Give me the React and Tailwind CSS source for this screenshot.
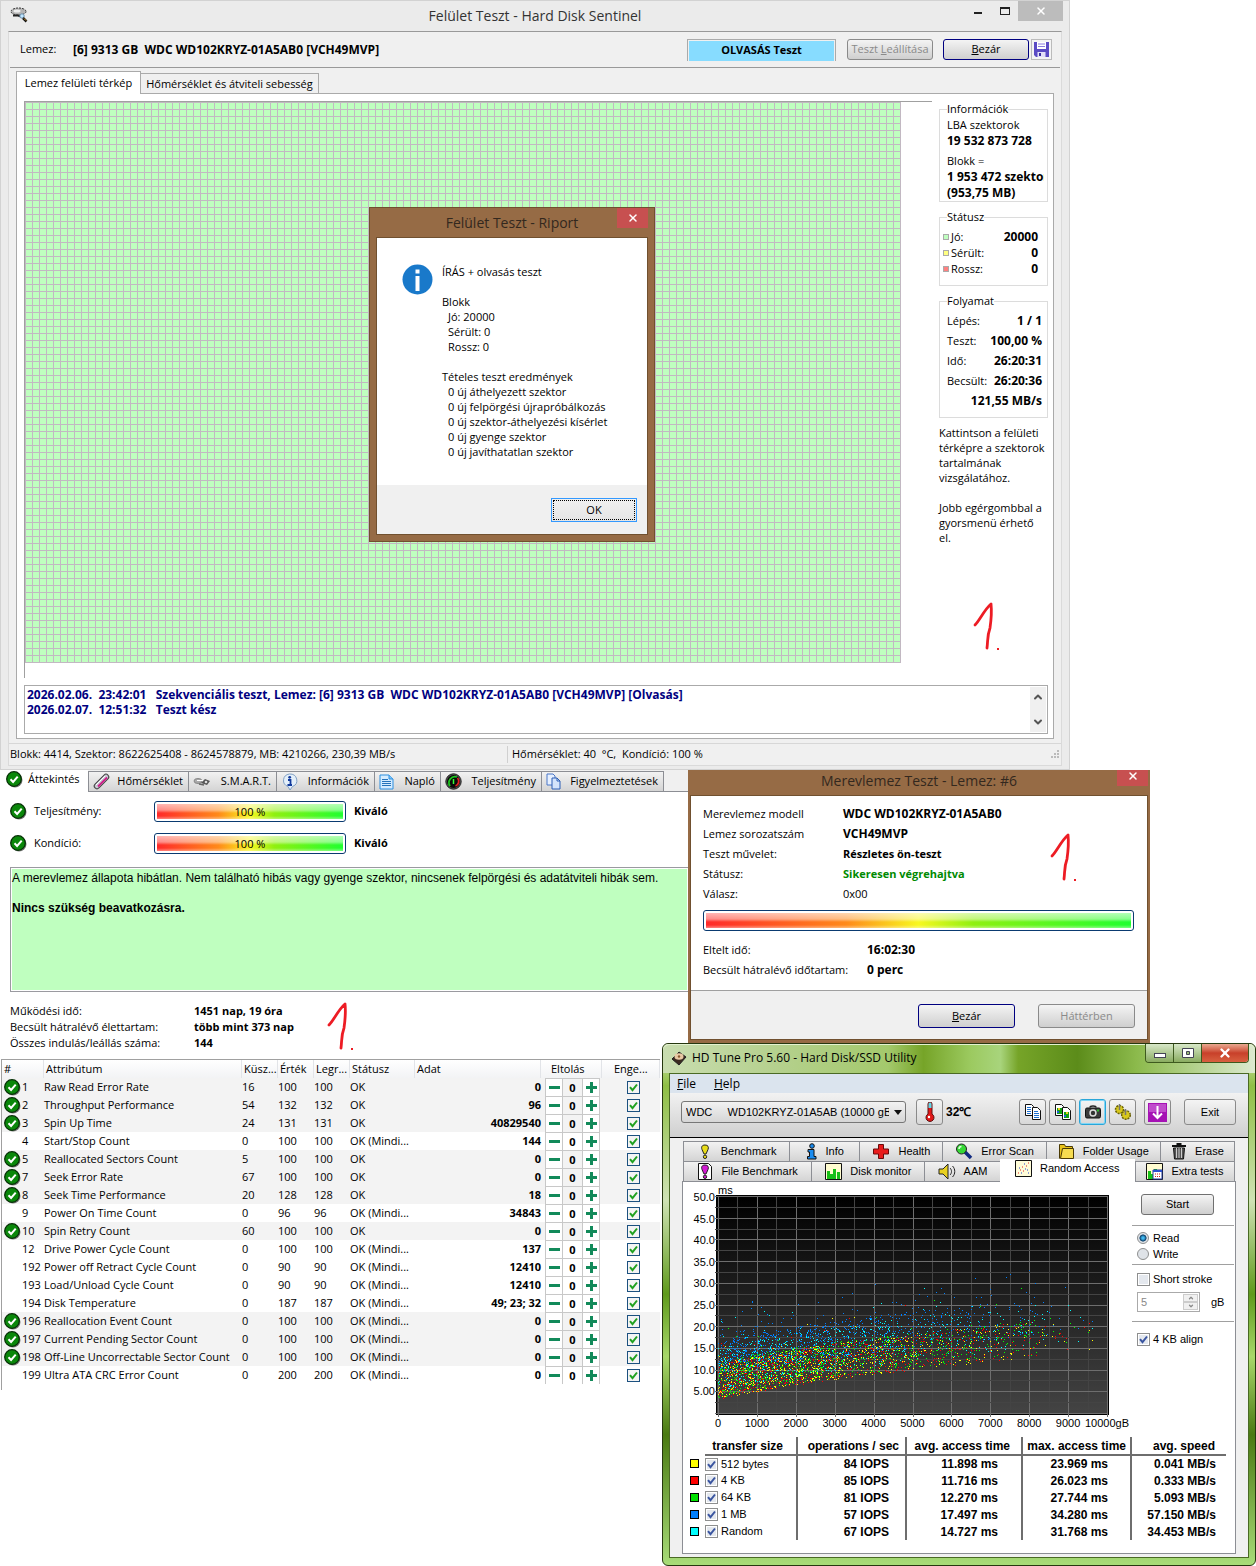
import React, { useState } from 'react';
import { X, ChevronUp, ChevronDown } from 'lucide-react';
import { clsx } from 'clsx';

const SMART_ROWS = [
  [1, 'Raw Read Error Rate', 16, 100, 100, true, '0'],
  [2, 'Throughput Performance', 54, 132, 132, true, '96'],
  [3, 'Spin Up Time', 24, 131, 131, true, '40829540'],
  [4, 'Start/Stop Count', 0, 100, 100, false, '144'],
  [5, 'Reallocated Sectors Count', 5, 100, 100, true, '0'],
  [7, 'Seek Error Rate', 67, 100, 100, true, '0'],
  [8, 'Seek Time Performance', 20, 128, 128, true, '18'],
  [9, 'Power On Time Count', 0, 96, 96, false, '34843'],
  [10, 'Spin Retry Count', 60, 100, 100, true, '0'],
  [12, 'Drive Power Cycle Count', 0, 100, 100, false, '137'],
  [192, 'Power off Retract Cycle Count', 0, 90, 90, false, '12410'],
  [193, 'Load/Unload Cycle Count', 0, 90, 90, false, '12410'],
  [194, 'Disk Temperature', 0, 187, 187, false, '49; 23; 32'],
  [196, 'Reallocation Event Count', 0, 100, 100, false, '0', true],
  [197, 'Current Pending Sector Count', 0, 100, 100, false, '0', true],
  [198, 'Off-Line Uncorrectable Sector Count', 0, 100, 100, false, '0', true],
  [199, 'Ultra ATA CRC Error Count', 0, 200, 200, false, '0'],
];

const RESULTS = [
  ['512 bytes', 'bg-[#ffff00]', '84 IOPS', '11.898 ms', '23.969 ms', '0.041 MB/s'],
  ['4 KB', 'bg-[#ff0000]', '85 IOPS', '11.716 ms', '26.023 ms', '0.333 MB/s'],
  ['64 KB', 'bg-[#00e000]', '81 IOPS', '12.270 ms', '27.744 ms', '5.093 MB/s'],
  ['1 MB', 'bg-[#0080ff]', '57 IOPS', '17.497 ms', '34.280 ms', '57.150 MB/s'],
  ['Random', 'bg-[#00ffff]', '67 IOPS', '14.727 ms', '31.768 ms', '34.453 MB/s'],
];

/* ---------- icons ---------- */

const OkIcon = () => (
  <svg width="17" height="17" viewBox="0 0 17 17" className="shrink-0">
    <circle cx="9" cy="9" r="7.5" fill="#777" />
    <circle cx="8" cy="8" r="7.3" fill="#0a870a" stroke="#063006" strokeWidth="1.3" />
    <path d="M4.500 8.200l2.600 2.800 4.600-5.400" fill="none" stroke="#fff" strokeWidth="2" />
  </svg>
);

const DiskIcon = () => (
  <svg width="18" height="16" viewBox="0 0 18 16">
    <ellipse cx="8.500" cy="4.500" rx="7.500" ry="3.500" fill="#b4b4b4" stroke="#333" strokeDasharray="2 1" />
    <ellipse cx="7" cy="4" rx="3.500" ry="1.500" fill="#eee" />
    <path d="M3 8.500h5l3 1" stroke="#222" strokeWidth="2" fill="none" />
    <circle cx="12" cy="9" r="2.200" fill="#bfe6ff" stroke="#6a8ca8" />
    <path d="M13 11l3.500 3.500" stroke="#111" strokeWidth="2.500" />
    <path d="M14 11.500l2 2" stroke="#e0a030" />
  </svg>
);

const FloppyIcon = () => (
  <svg width="17" height="17" viewBox="0 0 17 17">
    <path d="M1 1h15v15H3l-2-2z" fill="#5b4bc4" />
    <path d="M4 1h9v7H4z" fill="#fff" />
    <path d="M5 3h7M5 5.500h7" stroke="#8a7de0" />
    <path d="M4.500 11h8v5h-8z" fill="#e4e0f8" />
    <path d="M6 12h2v3H6z" fill="#3a2ea0" />
  </svg>
);

const TubeIcon = () => (
  <svg width="18" height="17" viewBox="0 0 18 17">
    <path d="M4 13L13 4" stroke="#444" strokeWidth="6.500" strokeLinecap="round" />
    <path d="M4 13L13 4" stroke="#c9c9d4" strokeWidth="4.500" strokeLinecap="round" />
    <path d="M5 13.500L14 4.500" stroke="#d0208a" strokeWidth="1.800" />
    <path d="M3 12l9-9" stroke="#fff" />
  </svg>
);

const SmartIcon = () => (
  <svg width="18" height="14" viewBox="0 0 18 14">
    <ellipse cx="5" cy="6" rx="4" ry="2.500" fill="#aaa" stroke="#888" />
    <path d="M8 8l4-4 5 2-3 4z" fill="#555" />
    <path d="M4 5.500h6" stroke="#fff" />
    <path d="M6 9l5 1" stroke="#666" strokeWidth="1.500" />
    <circle cx="13" cy="7" r="1.300" fill="#ddd" />
  </svg>
);

const BalloonIcon = () => (
  <svg width="17" height="18" viewBox="0 0 17 18">
    <path d="M8.500 1a7 6.500 0 0 1 3 12.500L9 17l-2-3.500A7 6.500 0 0 1 8.500 1z" fill="#e3effa" stroke="#7f9fc4" />
    <path d="M7 7h2.500v5M6.500 12h4.500" stroke="#123a9c" strokeWidth="1.800" fill="none" />
    <circle cx="8.700" cy="4.300" r="1.400" fill="#123a9c" />
  </svg>
);

const NoteIcon = () => (
  <svg width="15" height="16" viewBox="0 0 15 16">
    <path d="M1 1h9l4 4v10H1z" fill="#d5ecff" stroke="#2d8fe0" />
    <path d="M10 1v4h4" fill="#7cc4f8" stroke="#2d8fe0" />
    <path d="M3 5.500h6M3 7.500h9M3 9.500h9M3 11.500h9" stroke="#2573bb" />
  </svg>
);

const GaugeIcon = () => (
  <svg width="17" height="17" viewBox="0 0 17 17">
    <circle cx="8.500" cy="8.500" r="7.700" fill="#555" stroke="#222" />
    <circle cx="8.500" cy="8.500" r="6.500" fill="#0a0a0a" />
    <path d="M5 13a6 6 0 0 1 7-9" stroke="#1ec81e" strokeWidth="1.800" fill="none" />
    <path d="M12.500 5a5 5 0 0 1-2 8" stroke="#e02020" strokeWidth="1.800" fill="none" />
    <path d="M8.500 11V6" stroke="#3f3" strokeWidth="1.500" />
  </svg>
);

const PagesIcon = () => (
  <svg width="15" height="17" viewBox="0 0 15 17">
    <path d="M1 1h6l2 2v9H1z" fill="#e6f0ff" stroke="#4a77c8" />
    <path d="M6 5h5l3 3v8H6z" fill="#d4e4fb" stroke="#2d5fb5" />
    <path d="M11 5v3h3" fill="none" stroke="#2d5fb5" />
  </svg>
);

const CopyIcon = ({ image }) => (
  <svg width="18" height="18" viewBox="0 0 18 18">
    <path d="M1.500 1.500h6l2 2v9h-8z" fill="#fff" stroke="#111" />
    <path d="M8.500 4.500h5l3 3v9h-8z" fill="#fff" stroke="#111" />
    {image ? (
      <>
        <path d="M3 5h5v6H3zM10 9h5v6h-5z" fill="#12a012" />
        <path d="M4 5h2v2H4zM12 9h2v2h-2z" fill="#e8d020" />
        <path d="M3 8h2v2H3zM10 12h2v2h-2z" fill="#2060e0" />
      </>
    ) : (
      <path d="M3 4.500h4M3 6.500h4M3 8.500h4M3 10.500h4M10 8.500h4M10 10.500h5M10 12.500h5M10 14.500h5" stroke="#1d70d0" />
    )}
  </svg>
);

const CameraIcon = () => (
  <svg width="18" height="16" viewBox="0 0 18 16">
    <path d="M6 3.500c0-2 6-2 6 0" fill="none" stroke="#222" strokeWidth="1.500" />
    <rect x="1.500" y="4" width="15" height="10" rx="1.500" fill="#3b3b3b" stroke="#111" />
    <circle cx="9" cy="9" r="3.700" fill="#ddd" />
    <circle cx="9" cy="9" r="2.200" fill="#333" />
    <path d="M13 5.500h2v2h-2z" fill="#2ac02a" />
  </svg>
);

const GearsIcon = () => (
  <svg width="18" height="18" viewBox="0 0 18 18">
    <circle cx="5.500" cy="6.500" r="4" fill="#d8c81c" stroke="#6b6208" strokeDasharray="2 1" strokeWidth="1.500" />
    <circle cx="12" cy="12" r="4.300" fill="#d8c81c" stroke="#6b6208" strokeDasharray="2 1" strokeWidth="1.500" />
    <path d="M5.500 1v6M11.500 6v6" stroke="#777" strokeWidth="1.500" />
  </svg>
);

const ArrowIcon = () => (
  <svg width="19" height="19" viewBox="0 0 19 19">
    <path d="M0 0h19v19H0z" fill="#a512b4" />
    <path d="M1 1h17v8H1z" fill="#c04ccc" />
    <path d="M9.500 3v12M5 10.500l4.500 4.500 4.500-4.500" stroke="#fff" strokeWidth="2" fill="none" />
  </svg>
);

const ThermoIcon = () => (
  <svg width="12" height="20" viewBox="0 0 12 20">
    <path d="M4 2a2 2 0 0 1 4 0v10a4 4 0 1 1-4 0z" fill="#e01818" stroke="#5a1010" />
    <path d="M4.500 2a1.500 1.500 0 0 1 3 0v4h-3z" fill="#5fd8e8" />
    <circle cx="5" cy="15" r="1.200" fill="#fff" />
  </svg>
);

const BangIcon = ({ page }) => (
  <svg width="16" height="17" viewBox="0 0 16 17">
    {page && <path d="M1.500.500h10l3 3v13h-13z" fill="#fff" stroke="#111" />}
    <path d="M8 2c3 0 4 2 3 4.500L9 11H7L5 6.500C4 4 5 2 8 2z" fill={page ? '#d31bd3' : '#e8dc18'} stroke="#222" />
    <circle cx="8" cy="13.800" r="1.700" fill={page ? '#d31bd3' : '#e8dc18'} stroke="#222" />
  </svg>
);

const InfoIcon = () => (
  <svg width="12" height="17" viewBox="0 0 12 17">
    <circle cx="6" cy="3" r="2.300" fill="#1a8cf0" stroke="#111" />
    <path d="M2 6.500h6v7h2v2.500H1.500v-2.500h2v-4.500H2z" fill="#1a8cf0" stroke="#111" />
  </svg>
);

const CrossIcon = () => (
  <svg width="18" height="17" viewBox="0 0 18 17">
    <path d="M6.500 1.500h5v4.500h5v5h-5V15.500h-5V11h-5V6h5z" fill="#e81c1c" stroke="#6a0a0a" />
  </svg>
);

const LoupeIcon = () => (
  <svg width="18" height="17" viewBox="0 0 18 17">
    <path d="M10 9l6 6" stroke="#112a80" strokeWidth="3.500" />
    <circle cx="6.500" cy="6" r="5" fill="#35d835" stroke="#222" />
    <path d="M4 6a2.500 2.500 0 0 1 2.500-2.500" stroke="#dfd" strokeWidth="1.500" fill="none" />
  </svg>
);

const FolderIcon = () => (
  <svg width="17" height="17" viewBox="0 0 17 17">
    <path d="M1.500 15.500v-14h5l1 2h7v3" fill="#e8c21a" stroke="#4a3a04" />
    <path d="M4.500 5.500h11v10h-13z" fill="#f6dc50" stroke="#4a3a04" />
  </svg>
);

const BinIcon = () => (
  <svg width="16" height="17" viewBox="0 0 16 17">
    <path d="M1 3h14M5.500 1h5" stroke="#111" strokeWidth="2" />
    <path d="M2.500 5h11l-1 11h-9z" fill="#555" stroke="#111" />
    <path d="M5.500 5v10M8 5v10M10.500 5v10" stroke="#ccc" />
  </svg>
);

const BarsIcon = ({ grid }) => (
  <svg width="17" height="17" viewBox="0 0 17 17">
    <path d="M.500.500h16v16H.500z" fill="#fffcd0" stroke="#111" />
    <path d="M2 8h3v8H2zM5 11h3v5H5zM8 6h3v10H8zM12 9h3v7h-3z" fill="#18c018" />
    {grid && (
      <>
        <path d="M7 7h9v9H7z" fill="#fff" stroke="#223a9a" />
        <path d="M7 7h9v2H7z" fill="#2a50d0" />
        <path d="M9 11h6M9 13.500h6" stroke="#d02020" strokeDasharray="1 1" />
      </>
    )}
  </svg>
);

const SpeakerIcon = () => (
  <svg width="18" height="17" viewBox="0 0 18 17">
    <path d="M1 6h4l5-5v15l-5-5H1z" fill="#e8d020" stroke="#222" />
    <path d="M12 5c2 2 2 5 0 7M14.500 3c3 3 3 8 0 11" stroke="#222" fill="none" />
  </svg>
);

const DotsIcon = () => (
  <svg width="17" height="17" viewBox="0 0 17 17">
    <path d="M.500.500h16v16H.500z" fill="#fffcd8" stroke="#111" />
    <path d="M3 13h1M5 10h1M8 11h1M7 7h1M11 6h1M13 3h1" stroke="#e02020" />
    <path d="M4 8h1M6 13h1M10 9h1M12 10h1M9 4h1M13 13h1" stroke="#2040d0" />
  </svg>
);

const PenMark = ({ className }) => (
  <svg width="32" height="56" viewBox="0 0 32 56" className={clsx('pointer-events-none absolute', className)}>
    <path d="M5 27C10 22 14 12 21 6c1 9 0 17-1 24-3 8-2 13-3 20" fill="none" stroke="#ed1c24" strokeWidth="2.800" strokeLinecap="round" strokeLinejoin="round" />
    <path d="M27 50h2v2h-2z" fill="#ed1c24" />
  </svg>
);

/* ---------- shared controls ---------- */

function CheckBox({ id, label, defaultChecked, tone }) {
  const [on, setOn] = useState(!!defaultChecked);
  const green = tone === 'green';
  return (
    <span className="inline-grid shrink-0">
      <input
        id={id} type="checkbox" aria-label={label} checked={on} onChange={(e) => setOn(e.target.checked)}
        className={clsx('col-start-1 row-start-1 h-[13px] w-[13px] appearance-none border', green ? 'border-[#1c5180] bg-[#f4f4f4]' : 'border-[#8e8f8f] bg-[#e4e8ee] shadow-[inset_0_0_0_1px_#fff]')}
      />
      {on && (
        <svg viewBox="0 0 13 13" className="pointer-events-none col-start-1 row-start-1 h-[13px] w-[13px]">
          <path d="M3 6.200l2.500 3L10 3.500" fill="none" stroke={green ? '#21a121' : '#3a55a0'} strokeWidth="2" />
        </svg>
      )}
    </span>
  );
}

const Radio = ({ id, label, defaultChecked }) => (
  <label htmlFor={id} className="flex h-4 items-center gap-1">
    <input
      id={id} type="radio" name="mode" defaultChecked={defaultChecked}
      className="h-3 w-3 appearance-none rounded-full border border-[#8e8f8f] bg-[#dfe3e8] checked:bg-[radial-gradient(circle,#3fb8f0_15%,#0c3c66_45%,#dfe3e8_55%)]"
    />
    {label}
  </label>
);

const WinButton = ({ children, disabled, className }) => (
  <button
    type="button" disabled={disabled}
    className={clsx('rounded-[3px] border bg-gradient-to-b from-[#f4f4f4] to-[#cfcfcf] text-center', disabled ? 'border-[#8a8a8a] text-[#8a8a8a]' : 'border-[#000080]', className)}
  >
    {children}
  </button>
);

const HealthBar = ({ children }) => (
  <div className="rounded-[3px] border border-[#0a3a70] bg-white p-[2px]">
    <div className="h-[15px] bg-[linear-gradient(180deg,rgba(255,255,255,0.65),rgba(255,255,255,0.45)_40%,rgba(255,255,255,0)_60%,rgba(255,255,255,0)_80%,rgba(255,255,255,0.4)),linear-gradient(90deg,#ff2a2a,#ff8a1a_33%,#f8f820_50%,#90f010_63%,#20ff30)] text-center leading-[15px]">
      {children}
    </div>
  </div>
);

const Group = ({ title, className, children }) => (
  <fieldset className={clsx('min-w-0 border border-[#dcdcdc] px-[7px]', className)}>
    <legend className="leading-4">{title}</legend>
    {children}
  </fieldset>
);

const Pair = ({ label, value, className }) => (
  <div className={clsx('flex justify-between whitespace-nowrap', className)}>
    <span>{label}</span>
    <b className="text-xs leading-5">{value}</b>
  </div>
);

/* ---------- surface test window ---------- */

function ReportDialog() {
  return (
    <div className="absolute left-[368px] top-[206px] w-[286px] border border-[#70502f] bg-[#966b45] px-[6px] pb-[6px]">
      <div className="relative flex h-[29px] items-center justify-center">
        <h2 className="text-sm text-[#33281e]">Felület Teszt - Riport</h2>
        <button type="button" aria-label="Close" className="absolute right-0 top-0 flex h-5 w-[31px] items-center justify-center bg-[#c75050] text-white">
          <X size={12} strokeWidth={3} />
        </button>
      </div>
      <div className="border border-[#70502f] bg-white">
        <div className="flex h-[247px] items-start gap-[9px] pl-[25px] pt-[26px]">
          <svg width="31" height="31" viewBox="0 0 31 31">
            <circle cx="15.500" cy="15.500" r="15" fill="#1979ca" />
            <path d="M13.500 12h4v15h-4zM13.500 5.500h4v4h-4z" fill="#fff" />
          </svg>
          <div className="whitespace-pre leading-[15px]">
            <p>ÍRÁS + olvasás teszt</p>
            <p className="mt-[15px]">Blokk</p>
            <div className="pl-1.5">
              <p>Jó: 20000</p>
              <p>Sérült: 0</p>
              <p>Rossz: 0</p>
            </div>
            <p className="mt-[15px]">Tételes teszt eredmények</p>
            <div className="pl-1.5">
              <p>0 új áthelyezett szektor</p>
              <p>0 új felpörgési újrapróbálkozás</p>
              <p>0 új szektor-áthelyezési kísérlet</p>
              <p>0 új gyenge szektor</p>
              <p>0 új javíthatatlan szektor</p>
            </div>
          </div>
        </div>
        <div className="flex h-[49px] items-center justify-end bg-[#f0f0f0] pr-[10px]">
          <button type="button" className="h-6 w-[86px] border border-[#3399ff] bg-gradient-to-b from-[#f0f0f0] to-[#e5e5e5] p-px">
            <span className="block h-full border border-dotted border-black leading-[18px]">OK</span>
          </button>
        </div>
      </div>
    </div>
  );
}

function SurfaceTest() {
  return (
    <section className="relative mr-[186px] border border-[#d2d2d2] bg-[#ebebeb] px-[7px] pb-[3px]">
      <header className="relative flex h-[30px] items-center justify-center">
        <span className="absolute left-[2px] top-[6px]"><DiskIcon /></span>
        <h1 className="text-sm text-[#333]">Felület Teszt - Hard Disk Sentinel</h1>
        <div className="absolute -right-px top-0 flex">
          <button type="button" aria-label="Minimize" className="flex h-5 w-[27px] items-center justify-center pt-1">
            <span className="h-[2px] w-2 bg-[#222]" />
          </button>
          <button type="button" aria-label="Maximize" className="flex h-5 w-[27px] items-center justify-center">
            <span className="h-2 w-[10px] border border-t-2 border-[#222]" />
          </button>
          <button type="button" aria-label="Close" className="flex h-5 w-[45px] items-center justify-center bg-[#bcbcbc] text-white">
            <X size={12} strokeWidth={3} />
          </button>
        </div>
      </header>

      <div className="border-x border-b border-t border-[#dadada] border-t-[#999] bg-[#f0f0f0]">
        <div className="mx-px flex h-9 items-center border-b border-[#999] px-[10px] pr-2">
          <span className="w-[53px]">Lemez:</span>
          <b className="flex-1 whitespace-pre text-xs">[6] 9313 GB  WDC WD102KRYZ-01A5AB0 [VCH49MVP]</b>
          <div className="h-[22px] w-[149px] border-x border-t border-[#aaa] p-px">
            <div className="h-5 bg-[#87dcff] text-center font-bold leading-[18px]">OLVASÁS Teszt</div>
          </div>
          <WinButton disabled className="ml-[11px] h-[21px] w-[86px] whitespace-nowrap">Teszt <u>L</u>eállítása</WinButton>
          <WinButton className="ml-[10px] h-[21px] w-[86px]"><u>B</u>ezár</WinButton>
          <button type="button" aria-label="Save" className="ml-[2px] flex h-[21px] w-[21px] items-center justify-center border border-[#bbb] bg-[#f4f4f4]"><FloppyIcon /></button>
        </div>

        <div className="mt-[3px] flex items-end px-[7px]">
          <button type="button" className="relative -mb-px h-[23px] w-[125px] whitespace-nowrap border-x border-t border-[#aaa] bg-white pb-px leading-5">Lemez felületi térkép</button>
          <button type="button" className="h-5 w-[178px] whitespace-nowrap border-r border-t border-[#aaa] leading-5">Hőmérséklet és átviteli sebesség</button>
        </div>

        <div className="mx-[7px] border border-[#aaa] bg-white pb-1 pl-[7px] pr-[5px] pt-[7px]">
          <div className="flex gap-[7px]">
            <div className="h-[577px] flex-1 border-l border-t border-[#a0a0a0]">
              <div className="mr-[31px] h-[561px] bg-[#bfffbf] bg-[linear-gradient(#c2b8c2_1px,transparent_1px),linear-gradient(90deg,#c2b8c2_1px,transparent_1px)] bg-[size:7px_7px]" />
            </div>
            <aside className="w-[109px]">
              <Group title="Információk" className="overflow-hidden">
                <div className="whitespace-nowrap leading-4">
                  <p>LBA szektorok</p>
                  <p className="text-xs font-bold">19 532 873 728</p>
                  <p className="mt-1">Blokk =</p>
                  <p className="-mr-1 overflow-hidden text-xs font-bold">1 953 472 szektor</p>
                  <p className="text-xs font-bold">(953,75 MB)</p>
                </div>
              </Group>
              <Group title="Státusz" className="mt-[7px] pb-2 pt-1">
                {[['Jó:', '20000', 'bg-[#bfffbf]'], ['Sérült:', '0', 'bg-[#ffff80]'], ['Rossz:', '0', 'bg-[#ff8080]']].map(([label, value, color]) => (
                  <div key={label} className="-ml-1 mr-[2px] flex items-center gap-[2px] leading-4">
                    <span className={clsx('h-[6px] w-[6px] border border-[#aaa]', color)} />
                    <span className="flex-1">{label}</span>
                    <b className="text-xs">{value}</b>
                  </div>
                ))}
              </Group>
              <Group title="Folyamat" className="mt-[7px] pb-[6px] pt-[2px]">
                <div className="-mr-[2px] leading-5">
                  <Pair label="Lépés:" value="1 / 1" />
                  <Pair label="Teszt:" value="100,00 %" />
                  <Pair label="Idő:" value="26:20:31" />
                  <Pair label="Becsült:" value="26:20:36" />
                  <p className="text-right text-xs font-bold leading-5">121,55 MB/s</p>
                </div>
              </Group>
              <p className="mt-[7px] leading-[15px]">Kattintson a felületi térképre a szektorok tartalmának vizsgálatához.</p>
              <p className="mt-[15px] leading-[15px]">Jobb egérgombbal a gyorsmenü érhető el.</p>
            </aside>
          </div>

          <div className="mt-[7px] flex h-[49px] border border-[#aaa] bg-white">
            <div className="flex-1 whitespace-pre pl-[2px] pt-px text-xs font-bold leading-[15px] text-[#000080]">
              <p className="leading-[15px]">2026.02.06.  23:42:01   Szekvenciális teszt, Lemez: [6] 9313 GB  WDC WD102KRYZ-01A5AB0 [VCH49MVP] [Olvasás]</p>
              <p className="leading-[15px]">2026.02.07.  12:51:32   Teszt kész</p>
            </div>
            <div className="my-px mr-px flex w-4 flex-col items-center justify-between bg-[#f0f0f0] py-1 text-[#555]">
              <button type="button" aria-label="Scroll up"><ChevronUp size={12} strokeWidth={4} /></button>
              <button type="button" aria-label="Scroll down"><ChevronDown size={12} strokeWidth={4} /></button>
            </div>
          </div>
        </div>

        <footer className="mt-1 flex h-[22px] items-center border-t border-[#d7d7d7] pl-px">
          <span className="w-[498px] border-r border-[#d0d0d0]">Blokk: 4414, Szektor: 8622625408 - 8624578879, MB: 4210266, 230,39 MB/s</span>
          <span className="flex-1 whitespace-pre pl-1">Hőmérséklet: 40  °C,  Kondíció: 100 %</span>
          <svg width="12" height="12" viewBox="0 0 12 12"><path d="M8 1h2v2H8zM5 4h2v2H5zM8 4h2v2H8zM2 7h2v2H2zM5 7h2v2H5zM8 7h2v2H8z" fill="#bbb" /></svg>
        </footer>
      </div>

      <ReportDialog />
      <PenMark className="left-[969px] top-[597px]" />
    </section>
  );
}

/* ---------- disk overview ---------- */

const TABS = [
  ['Hőmérséklet', TubeIcon, 'w-[101px]'],
  ['S.M.A.R.T.', SmartIcon, 'w-[88px]'],
  ['Információk', BalloonIcon, 'w-[98px]'],
  ['Napló', NoteIcon, 'w-[66px]'],
  ['Teljesítmény', GaugeIcon, 'w-[101px]'],
  ['Figyelmeztetések', PagesIcon, 'w-[122px]'],
];

function Overview() {
  return (
    <section className="relative -mr-[26px] h-[289px]">
      <nav className="flex h-[22px] items-end border-b border-[#8c8e94] bg-[#f0f0f0]">
        <button type="button" className="-mb-px flex h-[22px] w-[88px] items-center gap-[5px] bg-white pb-1 pl-[6px]"><OkIcon />Áttekintés</button>
        {TABS.map(([label, Icon, width], i) => (
          <button key={label} type="button" className={clsx('flex h-5 items-center justify-between whitespace-nowrap border-r border-t border-[#8c8e94] bg-gradient-to-b from-[#f2f2f2] to-[#d4d4d4] pl-1 pr-[5px]', i === 0 && 'border-l', width)}>
            <Icon />{label}
          </button>
        ))}
      </nav>
      <div className="pl-[10px] pt-[3px]">
        {['Teljesítmény:', 'Kondíció:'].map((label) => (
          <div key={label} className="flex h-8 items-center">
            <OkIcon />
            <span className="w-[127px] pl-[7px]">{label}</span>
            <div className="w-[192px]"><HealthBar>100 %</HealthBar></div>
            <b className="pl-2">Kiváló</b>
          </div>
        ))}
        <div className="mt-[8px] h-[125px] whitespace-nowrap border border-r-0 border-[#9a9aa0] bg-[#bfffbf] pl-px pt-[3px] font-['Liberation_Sans',sans-serif] text-xs shadow-[inset_0_0_0_1px_#fff]">
          <p className="leading-[15px]">A merevlemez állapota hibátlan. Nem található hibás vagy gyenge szektor, nincsenek felpörgési és adatátviteli hibák sem.</p>
          <p className="mt-[15px] font-bold leading-[15px]">Nincs szükség beavatkozásra.</p>
        </div>
        <dl className="mt-[11px] grid grid-cols-[184px_1fr] leading-4">
          <dt>Működési idő:</dt><dd className="font-bold">1451 nap, 19 óra</dd>
          <dt>Becsült hátralévő élettartam:</dt><dd className="font-bold">több mint 373 nap</dd>
          <dt>Összes indulás/leállás száma:</dt><dd className="font-bold">144</dd>
        </dl>
      </div>
      <PenMark className="left-[324px] top-[228px]" />
    </section>
  );
}

function SmartTable() {
  return (
    <section className="ml-px mr-[2px] border-l border-t border-[#a0a0a0] pb-[6px]">
      <table className="w-full table-fixed border-separate border-spacing-0 whitespace-nowrap text-left">
        <colgroup>
          <col className="w-[42px]" />
          <col className="w-[198px]" />
          <col className="w-9" />
          <col className="w-9" />
          <col className="w-9" />
          <col className="w-[65px]" />
          <col />
          <col className="w-[61px]" />
          <col className="w-[58px]" />
        </colgroup>
        <thead>
          <tr className="h-[18px] bg-gradient-to-b from-white to-[#f2f3f5]">
            {['#', 'Attribútum', 'Küsz...', 'Érték', 'Legr...', 'Státusz', 'Adat', 'Eltolás', 'Enge...'].map((h) => (
              <th key={h} className={clsx('border-r border-[#e2e4e8] p-0 font-normal leading-[18px]', h === 'Eltolás' ? 'pl-[10px]' : h === 'Enge...' ? 'pl-3' : 'pl-[2px]')}>{h}</th>
            ))}
          </tr>
        </thead>
        <tbody>
          {SMART_ROWS.map(([id, name, threshold, value, worst, ok, data, flagged]) => (
            <tr key={id} className={clsx('h-[18px]', (ok || flagged) && 'bg-[#f3f3f3]')}>
              <td className="p-0">
                <div className="flex h-[18px] items-center pl-[2px]">
                  <span className="w-[18px] pt-px">{(ok || flagged) && <OkIcon />}</span>
                  {id}
                </div>
              </td>
              <td className="p-0">{name}</td>
              <td className="p-0">{threshold}</td>
              <td className="p-0">{value}</td>
              <td className="p-0">{worst}</td>
              <td className="p-0">{ok ? 'OK' : 'OK (Mindi...'}</td>
              <td className="p-0 text-right font-bold">{data}</td>
              <td className="p-0">
                <div className="ml-1 flex h-[18px] w-[55px] items-stretch border border-b-0 border-[#c8c8c8] leading-[17px]">
                  <button type="button" aria-label={`Decrease offset ${id}`} className="flex w-4 items-center justify-center bg-white">
                    <span className="h-[3px] w-[11px] bg-[#128a5a]" />
                  </button>
                  <b className="flex-1 border-x border-[#c8c8c8] text-center">0</b>
                  <button type="button" aria-label={`Increase offset ${id}`} className="flex w-4 items-center justify-center bg-white">
                    <svg width="11" height="11" viewBox="0 0 11 11"><path d="M4 0h3v4h4v3H7v4H4V7H0V4h4z" fill="#128a5a" /></svg>
                  </button>
                </div>
              </td>
              <td className="p-0">
                <div className="flex pl-[25px]"><CheckBox label={`Enable ${name}`} tone="green" defaultChecked /></div>
              </td>
            </tr>
          ))}
        </tbody>
      </table>
    </section>
  );
}

/* ---------- self-test dialog ---------- */

function SelfTest() {
  return (
    <section className="relative ml-[26px] mr-[106px] bg-[#966b45] px-[2px] pb-[3px]">
      <header className="relative flex h-[25px] items-center justify-center pb-[3px]">
        <h2 className="text-sm text-[#33281e]">Merevlemez Teszt - Lemez: #6</h2>
        <button type="button" aria-label="Close" className="absolute right-0 top-0 flex h-4 w-[31px] items-center justify-center bg-[#c75050] pb-1 text-white">
          <X size={12} strokeWidth={3} />
        </button>
      </header>
      <div className="border border-[#70502f] bg-white">
        <div className="h-[194px] pl-3 pr-[13px] pt-2 leading-5">
          <dl className="grid grid-cols-[140px_1fr]">
            <dt>Merevlemez modell</dt><dd className="text-xs font-bold leading-5">WDC WD102KRYZ-01A5AB0</dd>
            <dt>Lemez sorozatszám</dt><dd className="text-xs font-bold leading-5">VCH49MVP</dd>
            <dt>Teszt művelet:</dt><dd className="font-bold">Részletes ön-teszt</dd>
            <dt>Státusz:</dt><dd className="font-bold text-[#008a00]">Sikeresen végrehajtva</dd>
            <dt>Válasz:</dt><dd>0x00</dd>
          </dl>
          <div className="mt-[6px]"><HealthBar /></div>
          <dl className="mt-[9px] grid grid-cols-[164px_1fr]">
            <dt>Eltelt idő:</dt><dd className="text-xs font-bold leading-5">16:02:30</dd>
            <dt>Becsült hátralévő időtartam:</dt><dd className="text-xs font-bold leading-5">0 perc</dd>
          </dl>
        </div>
        <footer className="flex h-[49px] items-center justify-end gap-[23px] border-t border-[#a0a0a0] bg-[#f0f0f0] pr-3 pt-[2px]">
          <WinButton className="h-6 w-[97px]"><u>B</u>ezár</WinButton>
          <WinButton disabled className="h-6 w-[97px]">Háttérben</WinButton>
        </footer>
      </div>
      <PenMark className="left-[359px] top-[59px]" />
    </section>
  );
}

/* ---------- HD Tune ---------- */

const X0 = 28;
const X1 = 417;
const Y0 = 229;
const Y1 = 12;

const rng = (seed) => () => {
  seed = (seed * 1664525 + 1013904223) % 4294967296;
  return seed / 4294967296;
};

// base + spread are access times in ms above the seek curve
const series = (seed, count, base, spread, late) => {
  const rand = rng(seed);
  let d = '';
  for (let i = 0; i < count; i++) {
    const k = 10 * (1 - Math.pow(rand(), 0.42));
    const extra = rand() < late ? rand() * 8 : 0;
    const ms = 2.5 + 2.5 * Math.pow(k, 0.68) + base + rand() * spread + extra;
    const x = Math.round(X0 + (k / 10) * (X1 - X0));
    const y = Math.round(Y0 - (ms / 50) * (Y0 - Y1));
    d += `M${x} ${y}h1v1h-1z`;
  }
  return d;
};

const DOTS = [
  ['#0080ff', series(48, 900, 5, 8.5, 0.15)],
  ['#00ffff', series(59, 750, 2, 10, 0.06)],
  ['#00ff00', series(35, 800, 0.5, 8.3, 0.04)],
  ['#ff0000', series(27, 750, 0, 8.3, 0.03)],
  ['#ffff00', series(11, 700, 0, 8.3, 0.03)],
];

function AccessChart() {
  const xs = Array.from({ length: 21 }, (_, i) => Math.round(X0 + ((X1 - X0) * i) / 20));
  const ys = Array.from({ length: 21 }, (_, i) => Math.round(Y1 + ((Y0 - Y1) * i) / 20));
  return (
    <svg width="441" height="248" viewBox="0 0 441 248" className="shrink-0 text-[11px]" shapeRendering="crispEdges">
      <defs>
        <linearGradient id="plot" x1="0" y1="0" x2="0" y2="1">
          <stop offset="0" stopColor="#000" />
          <stop offset="1" stopColor="#444" />
        </linearGradient>
      </defs>
      <rect x="26" y="11" width="392" height="219" fill="url(#plot)" stroke="#000" />
      {xs.map((x, i) => <path key={x} d={`M${x}.5 12V${i % 2 ? 230 : 233}`} stroke={i % 2 ? '#444' : '#6e6e6e'} />)}
      {ys.map((y, i) => <path key={y} d={`M25 ${y}.5H417`} stroke={i % 2 ? '#444' : '#6e6e6e'} />)}
      {DOTS.map(([color, d]) => <path key={color} d={d} fill={color} />)}
      <text x="28" y="10">ms</text>
      {['50.0', '45.0', '40.0', '35.0', '30.0', '25.0', '20.0', '15.0', '10.0', '5.00'].map((t, i) => (
        <text key={t} x="25" y={17 + i * 21.6} textAnchor="end">{t}</text>
      ))}
      {Array.from({ length: 10 }, (_, i) => (
        <text key={i} x={X0 + i * 38.9} y="243" textAnchor="middle">{i * 1000}</text>
      ))}
      <text x="395" y="243">10000gB</text>
    </svg>
  );
}

const TuneTab = ({ icon, children }) => (
  <button type="button" className="flex h-5 items-center justify-center gap-2 whitespace-nowrap border-l border-t border-[#8c8e94] bg-gradient-to-b from-[#f2f2f2] to-[#d4d4d4] last:border-r">
    {icon}{children}
  </button>
);

const ToolButton = ({ label, active, className, children }) => (
  <button type="button" aria-label={label} className={clsx('flex h-[26px] w-[27px] items-center justify-center rounded-[3px] border bg-gradient-to-b from-[#f4f4f4] to-[#d8d8d8]', active ? 'border-[#2aa6d8] shadow-[inset_0_0_0_1px_#7fd6f7]' : 'border-[#8a8a8a]', className)}>
    {children}
  </button>
);

function HdTune() {
  return (
    <section className="rounded-md border border-[#26380f] bg-[linear-gradient(180deg,#d8eac0,#8fbf45_8%,#cfe3b4_30%,#5f9a1c_48%,#a8d86a_60%,#4a7a12_75%,#a8dc78)] px-[6px] pb-[7px] font-['Liberation_Sans',sans-serif]">
      <header className="-mx-[6px] flex h-[29px] items-start justify-between rounded-t-md bg-[linear-gradient(90deg,#c9ddb0,#b4d08c_20%,#a4c96c_38%,#76a428_44%,#9cca60_52%,#a8d47c_57%,#76a428_60%,#5c8c1a_70%,#8cba4c_80%,#dcead0)] pl-[8px] pr-[6px] shadow-[inset_0_1px_0_#e4f2d0]">
        <div className="flex h-[28px] items-center gap-[5px] font-['Open_Sans',sans-serif] text-xs">
          <svg width="16" height="16" viewBox="0 0 16 16">
            <path d="M1 9l7-7 7 5-7 8z" fill="#3b2a20" stroke="#222" />
            <ellipse cx="8" cy="6.500" rx="4.500" ry="3.200" fill="#e8c8a4" />
            <circle cx="8" cy="6.500" r="1.200" fill="#8a5a30" />
          </svg>
          <h2>HD Tune Pro 5.60 - Hard Disk/SSD Utility</h2>
        </div>
        <div className="flex h-[19px] overflow-hidden rounded-b border border-t-0 border-[#3e5a1e]">
          <button type="button" aria-label="Minimize" className="flex w-7 items-center justify-center border-r border-[#3e5a1e] bg-gradient-to-b from-[#d8e8c8] to-[#8aac60]"><span className="mt-1 h-[5px] w-3 border border-[#445] bg-white" /></button>
          <button type="button" aria-label="Maximize" className="flex w-7 items-center justify-center border-r border-[#3e5a1e] bg-gradient-to-b from-[#d8e8c8] to-[#8aac60]">
            <svg width="12" height="10" viewBox="0 0 12 10"><path d="M.500.500h11v9H.500z" fill="#fff" stroke="#445" /><path d="M4.500 3.500h3v3h-3z" fill="#9ab878" stroke="#445" /></svg>
          </button>
          <button type="button" aria-label="Close" className="flex w-[46px] items-center justify-center bg-gradient-to-b from-[#e8a890] via-[#c8402a] to-[#d86040] text-white"><X size={14} strokeWidth={4} /></button>
        </div>
      </header>

      <div className="border border-[#4a6a24] bg-[#f0f0f0]">
        <nav className="flex h-[19px] items-center gap-[18px] bg-[#dbe4ee] px-[7px] font-['Open_Sans',sans-serif] text-xs">
          <button type="button"><u>F</u>ile</button>
          <button type="button"><u>H</u>elp</button>
        </nav>
        <div className="flex h-[45px] items-center border-b border-black bg-gradient-to-b from-[#f2f2f2] to-[#cfcfcf] pb-[6px] pl-[11px] pr-3 text-[11px]">
          <span className="relative flex">
            <select aria-label="Drive" className="h-[22px] w-[225px] appearance-none whitespace-pre rounded-[3px] border border-[#777] bg-gradient-to-b from-[#f2f2f2] to-[#d6d6d6] pl-1 pr-4">
              <option>{'WDC\u00a0\u00a0\u00a0\u00a0 WD102KRYZ-01A5AB (10000 gB'}</option>
            </select>
            <svg width="8" height="5" viewBox="0 0 8 5" className="pointer-events-none absolute right-1 top-[9px]"><path d="M0 0h8L4 5z" fill="#111" /></svg>
          </span>
          <ToolButton label="Temperature" className="ml-[10px]"><ThermoIcon /></ToolButton>
          <b className="flex-1 pl-[3px] text-xs">32℃</b>
          <div className="flex gap-[3px]">
            <ToolButton label="Copy text"><CopyIcon /></ToolButton>
            <ToolButton label="Copy image"><CopyIcon image /></ToolButton>
            <ToolButton label="Screenshot" active><CameraIcon /></ToolButton>
            <ToolButton label="Options"><GearsIcon /></ToolButton>
          </div>
          <ToolButton label="Save" className="ml-2"><ArrowIcon /></ToolButton>
          <button type="button" className="ml-[13px] h-[26px] w-[52px] rounded-[3px] border border-[#8a8a8a] bg-gradient-to-b from-[#f4f4f4] to-[#d8d8d8]">Exit</button>
        </div>

        <div className="mx-3 mb-[3px] mt-[3px] text-[11px]">
          <div className="mx-px grid grid-cols-[106fr_70fr_83fr_103fr_114fr_75fr]">
            <TuneTab icon={<BangIcon />}>Benchmark</TuneTab>
            <TuneTab icon={<InfoIcon />}>Info</TuneTab>
            <TuneTab icon={<CrossIcon />}>Health</TuneTab>
            <TuneTab icon={<LoupeIcon />}>Error Scan</TuneTab>
            <TuneTab icon={<FolderIcon />}>Folder Usage</TuneTab>
            <TuneTab icon={<BinIcon />}>Erase</TuneTab>
          </div>
          <div className="mx-px grid grid-cols-[128fr_113fr_75fr_135fr_100fr]">
            <TuneTab icon={<BangIcon page />}>File Benchmark</TuneTab>
            <TuneTab icon={<BarsIcon />}>Disk monitor</TuneTab>
            <TuneTab icon={<SpeakerIcon />}>AAM</TuneTab>
            <button type="button" className="relative -mb-px -mt-[2px] flex items-center justify-center gap-2 whitespace-nowrap bg-white pb-1"><DotsIcon />Random Access</button>
            <TuneTab icon={<BarsIcon grid />}>Extra tests</TuneTab>
          </div>

          <div className="border border-[#8c8e94] bg-white pb-[13px]">
            <div className="flex justify-between pl-[7px] pr-px pt-[2px]">
              <AccessChart />
              <div className="w-[102px] pt-[10px]">
                <button type="button" className="ml-[9px] h-[21px] w-[73px] rounded-[3px] border border-[#707070] bg-gradient-to-b from-[#f4f4f4] to-[#cfcfcf]">Start</button>
                <div className="mt-[10px] border-y border-[#a0a0a0] pb-[2px] pl-[5px] pt-1">
                  <Radio id="read" label="Read" defaultChecked />
                  <Radio id="write" label="Write" />
                </div>
                <div className="border-b border-[#a0a0a0] pb-[9px] pl-[5px] pt-[6px]">
                  <label htmlFor="stroke" className="flex h-4 items-center gap-[3px] whitespace-nowrap"><CheckBox id="stroke" />Short stroke</label>
                  <div className="mt-[5px] flex items-center gap-[11px]">
                    <span className="flex h-5 w-[63px] border border-[#aaa] bg-white">
                      <input aria-label="Short stroke size" defaultValue="5" disabled className="w-full min-w-0 flex-1 pl-[3px] text-[#888]" />
                      <span className="m-px flex w-[15px] flex-col">
                        <button type="button" aria-label="Increase" className="flex flex-1 items-center justify-center border border-[#ccc] bg-[#f0f0f0] text-[#888]"><ChevronUp size={6} strokeWidth={5} /></button>
                        <button type="button" aria-label="Decrease" className="flex flex-1 items-center justify-center border border-[#ccc] bg-[#f0f0f0] text-[#888]"><ChevronDown size={6} strokeWidth={5} /></button>
                      </span>
                    </span>
                    gB
                  </div>
                </div>
                <label htmlFor="align" className="mt-[9px] flex h-4 items-center gap-[3px] whitespace-nowrap pl-[5px]"><CheckBox id="align" defaultChecked />4 KB align</label>
              </div>
            </div>

            <table className="ml-[7px] mr-[9px] mt-[5px] w-[calc(100%-16px)] table-fixed border-collapse whitespace-nowrap text-right text-xs">
              <colgroup>
                <col className="w-[15px]" />
                <col className="w-[92px]" />
                <col className="w-[109px]" />
                <col className="w-[116px]" />
                <col className="w-[109px]" />
                <col />
              </colgroup>
              <thead>
                <tr className="h-[18px] leading-[14px]">
                  <td />
                  <th className="border-b-2 border-r-2 border-[#6e6e6e] p-0 pr-[13px]">transfer size</th>
                  <th className="border-b-2 border-r-2 border-[#6e6e6e] p-0 pr-[6px]">operations / sec</th>
                  <th className="border-b-2 border-r-2 border-[#6e6e6e] p-0 pr-[11px]">avg. access time</th>
                  <th className="border-b-2 border-r-2 border-[#6e6e6e] p-0 pr-[4px]">max. access time</th>
                  <th className="border-b-2 border-[#6e6e6e] p-0 pr-[11px]">avg. speed</th>
                </tr>
              </thead>
              <tbody className="font-bold">
                {RESULTS.map(([size, color, ops, avg, max, speed]) => (
                  <tr key={size} className="h-[17px]">
                    <td className="p-0"><span className={clsx('block h-[9px] w-[9px] border border-black', color)} /></td>
                    <td className="border-r-2 border-[#6e6e6e] p-0 text-[11px] font-normal">
                      <label className="flex items-center gap-[3px]"><CheckBox label={size} defaultChecked />{size}</label>
                    </td>
                    <td className="border-r-2 border-[#6e6e6e] p-0 pr-4">{ops}</td>
                    <td className="border-r-2 border-[#6e6e6e] p-0 pr-[23px]">{avg}</td>
                    <td className="border-r-2 border-[#6e6e6e] p-0 pr-[22px]">{max}</td>
                    <td className="p-0 pr-[10px]">{speed}</td>
                  </tr>
                ))}
              </tbody>
            </table>
          </div>
        </div>
      </div>
    </section>
  );
}

export default function App() {
  return (
    <main className="min-h-screen min-w-[1200px] overflow-hidden bg-white font-['Open_Sans',sans-serif] text-[11px] text-black">
      <SurfaceTest />
      <div className="flex items-start">
        <div className="min-w-0 flex-1">
          <Overview />
          <SmartTable />
        </div>
        <div className="w-[594px]">
          <SelfTest />
          <HdTune />
        </div>
      </div>
    </main>
  );
}
